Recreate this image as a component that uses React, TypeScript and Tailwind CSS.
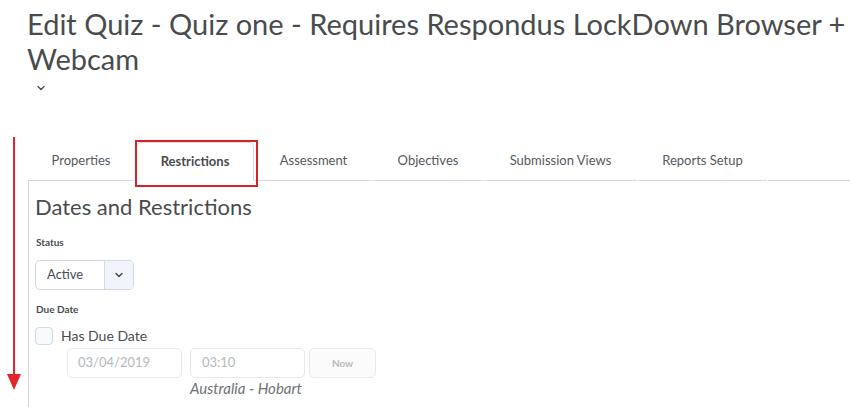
import React from "react";
import { ChevronDown } from "lucide-react";

const tabs = [
    { label: "Properties", active: false, w: "w-[106px]" },
    { label: "Restrictions", active: true, w: "w-[118px]" },
    { label: "Assessment", active: false, w: "w-[117px]" },
    { label: "Objectives", active: false, w: "w-[110px]" },
    { label: "Submission Views", active: false, w: "w-[153px]" },
    { label: "Reports Setup", active: false, w: "w-[129px]" },
];

export default function App() {
    return (
        <div
            className="relative w-[850px] h-[407px] overflow-hidden bg-white text-[#494c4e]"
            style={{ fontFamily: "Lato, 'Noto Sans', sans-serif" }}
        >
            {/* Page title */}
            <h1 className="ml-[27px] pt-[6px] text-[29px] leading-[35px] font-normal text-[#494c4e] whitespace-nowrap">
                Edit Quiz - Quiz one - Requires Respondus LockDown Browser +
                <br />
                Webcam
            </h1>
            <div className="ml-[35px] mt-[5px] h-[14px] flex items-center">
                <ChevronDown className="w-[12px] h-[12px] text-[#494c4e]" strokeWidth={2.5} />
            </div>

            {/* Tab strip */}
            <div className="ml-[28px] mt-[47px] flex items-end">
                {tabs.map((t) =>
                    t.active ? (
                        <div key={t.label} className="relative mx-[1px]">
                            <div className={`${t.w} h-[39px] flex items-center justify-center border border-b-0 border-[#d3d9e3] rounded-t-[5px] bg-white text-[13px] font-bold text-[#494c4e]`}>
                                {t.label}
                            </div>
                            <div className="absolute -left-[1px] -top-[2px] -right-[4px] -bottom-[6px] border-2 border-[#d6232b] pointer-events-none" />
                        </div>
                    ) : (
                        <div
                            key={t.label}
                            className={`${t.w} h-[39px] mr-[1px] flex items-center justify-center border-b border-[#d3d9e3] text-[13px] text-[#565a5c]`}
                        >
                            {t.label}
                        </div>
                    )
                )}
                <div className="flex-1 h-[39px] border-b border-[#d3d9e3]" />
            </div>

            {/* Restrictions panel */}
            <div className="ml-[28px] border-l border-[#d3d9e3] pl-[6px] pt-[11px] h-[240px]">
                <h2 className="text-[22px] leading-[30px] font-normal text-[#494c4e]">
                    Dates and Restrictions
                </h2>

                <div className="mt-[13px] pl-[1px] text-[10px] font-bold text-[#494c4e] leading-[14px]">
                    Status
                </div>
                <div className="mt-[11px] w-[99px] h-[30px] flex border border-[#d3d9e3] rounded-[5px] overflow-hidden">
                    <div className="flex-1 flex items-center pl-[11px] text-[13px] text-[#494c4e]">
                        Active
                    </div>
                    <div className="w-[29px] flex items-center justify-center bg-[#f1f5fb] border-l border-[#d3d9e3]">
                        <ChevronDown className="w-[12px] h-[12px] text-[#494c4e]" strokeWidth={3} />
                    </div>
                </div>

                <div className="mt-[12px] pl-[1px] text-[10px] font-bold text-[#494c4e] leading-[14px]">
                    Due Date
                </div>
                <label className="mt-[10px] flex items-center gap-[8px]">
                    <span className="w-[18px] h-[18px] rounded-[4px] border border-[#d3d9e3] bg-[#f9fafb]" />
                    <span className="text-[14px] text-[#494c4e] leading-[20px]">Has Due Date</span>
                </label>

                <div className="mt-[2px] ml-[32px] flex gap-[8px]">
                    <div className="w-[115px] h-[30px] flex items-center pl-[10px] border border-[#e6eaf0] rounded-[5px] text-[13px] text-[#b5b9bd]">
                        03/04/2019
                    </div>
                    <div className="flex flex-col">
                        <div className="flex gap-[4px]">
                            <div className="w-[115px] h-[30px] flex items-center pl-[11px] border border-[#e6eaf0] rounded-[5px] text-[13px] text-[#b5b9bd]">
                                03:10
                            </div>
                            <div className="w-[67px] h-[30px] flex items-center justify-center border border-[#e6eaf0] rounded-[5px] bg-[#fbfbfc] text-[10px] font-bold text-[#b5b9bd]">
                                Now
                            </div>
                        </div>
                        <div className="mt-[1px] text-[15px] italic text-[#6e7376] leading-[19px]">
                            Australia - Hobart
                        </div>
                    </div>
                </div>
            </div>

            {/* Scroll-down marker */}
            <div className="absolute left-[13px] top-[137px] w-[2px] h-[240px] bg-[#e3242b]" />
            <svg className="absolute left-[7px] top-[374px]" width="14" height="16" viewBox="0 0 14 16">
                <polygon points="0,0 14,0 7,16" fill="#e3242b" />
            </svg>
        </div>
    );
}
